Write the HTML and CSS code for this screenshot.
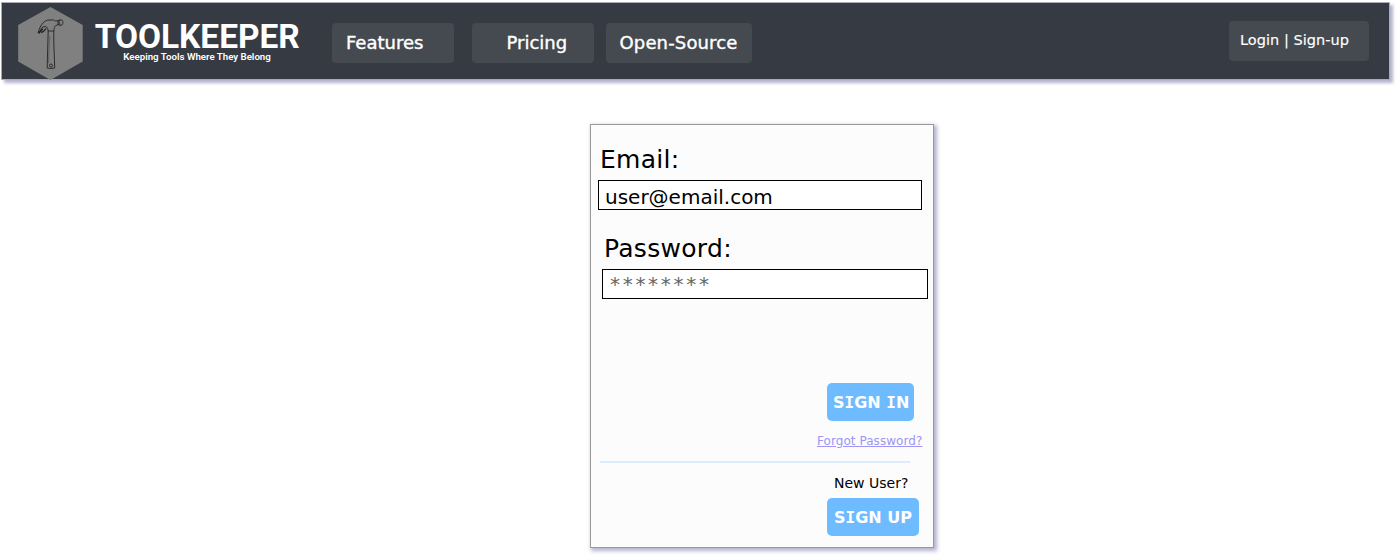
FILE: index.html
```html
<!DOCTYPE html>
<html lang="en">
<head>
<meta charset="utf-8">
<title>Toolkeeper</title>
<link rel="stylesheet" href="styles.css">
</head>
<body>
<header class="topbar">
  <svg class="logo" width="300" height="78" viewBox="0 0 300 78">
    <path class="hex" d="M48.5 4 L80.700 22 V58.500 L48.500 77 L16.200 58.500 V22 Z"/>
    <g class="hammer">
      <path d="M46 28 C46 24 44 23 41 24 C38 25.500 40 28 36 30 L37 27 C39 21 43 17 47 17 H51.500 C53 18.500 55 18 56 17.500 V22 C53 22 52 24 52 28 Z"/>
      <path d="M56 17.500 L59 16.700 C61.500 17 61.500 22 59 22.500 L56 21.500 M58 17 C56.500 19 57 21 58.500 22"/>
      <path d="M46.200 28 C45.800 42 45.500 52 45.200 65 Q49 66 52.700 65 C52.500 53 51.500 42 51.800 28"/>
      <path class="fine" d="M48 33 C46.800 42 47 52 46.500 60"/>
      <circle cx="49" cy="62.500" r="1.500"/>
      <path class="claw" d="M41 26 C38.500 27 37.500 29 36.700 30.500 M44 25.500 C42.500 28 41 29 39 29.500"/>
    </g>
    <text class="brand" x="92.700" y="45" textLength="205" lengthAdjust="spacingAndGlyphs">TOOLKEEPER</text>
    <text class="tagline" x="121.300" y="57.300" textLength="147.500" lengthAdjust="spacingAndGlyphs">Keeping Tools Where They Belong</text>
  </svg>
  <nav class="nav">
    <a class="pill features">Features</a>
    <a class="pill pricing">Pricing</a>
    <a class="pill source">Open-Source</a>
  </nav>
  <a class="pill account">Login | Sign-up</a>
</header>
<main class="card">
  <label class="label">Email:</label>
  <div class="field">user@email.com</div>
  <label class="label password-label">Password:</label>
  <div class="field password">********</div>
  <div class="button sign-in">S<span class="slab">I</span>GN <span class="slab">I</span>N</div>
  <a class="forgot">Forgot Password?</a>
  <div class="divider"></div>
  <div class="new-user">New User?</div>
  <div class="button sign-up">S<span class="slab">I</span>GN UP</div>
</main>
</body>
</html>
```
FILE: styles.css
```css
* { box-sizing: border-box; }
html { height: 100%; }
body {
  margin: 0;
  height: 556px;
  padding: 3px 0 0 2px;
  background: #fff;
  font-family: "DejaVu Sans", Verdana, sans-serif;
  overflow: hidden;
}
.topbar {
  display: flex;
  align-items: flex-start;
  width: 1387px;
  height: 76px;
  background: #363a42;
  box-shadow: 0 0 0 1px #a9abb8, 3px 3px 3px 1px #b4b4cf;
}
.logo { flex: none; overflow: visible; }
.hex { fill: #808080; }
.hammer { fill: none; stroke: #222; stroke-width: .9; }
.fine { stroke: #555; stroke-width: .7; }
.claw { stroke-width: 1.4; }
.brand { font: bold 33.5px Roboto, sans-serif; fill: #fff; }
.tagline { font: 600 9.8px Roboto, sans-serif; fill: #fff; }
.nav { display: flex; margin: 20px 0 0 29.500px; }
.pill {
  height: 40px;
  border-radius: 4px;
  background: #444a4f;
  color: #fff;
  font-size: 18px;
  line-height: 39px;
  white-space: nowrap;
  -webkit-text-stroke: .4px #fff;
}
.features { width: 122px; padding-left: 14.500px; }
.pricing { width: 122px; margin-left: 18px; padding-left: 35px; }
.source { width: 146px; margin-left: 12px; padding-left: 14px; letter-spacing: .15px; }
.account {
  width: 140px;
  margin: 18px 20.500px 0 auto;
  padding-left: 11.500px;
  font-size: 14.500px;
  letter-spacing: .04px;
  -webkit-text-stroke-width: .15px;
}
.card {
  display: flex;
  flex-direction: column;
  width: 344px;
  height: 424px;
  margin: 45px 0 0 588px;
  padding: 19px 0 0 7px;
  border: 1px solid #999;
  background: #fcfcfc;
  box-shadow: 2px 2px 4px 1px #b4b4cf;
  color: #000;
}
.label { height: 36px; padding-left: 2px; line-height: 31px; font-size: 25px; letter-spacing: .3px; }
.password-label { margin-top: 23px; padding-left: 6px; letter-spacing: .3px; line-height: 32px; }
.field {
  width: 324px;
  height: 30px;
  border: 1px solid #000;
  background: #fff;
  padding-left: 6px;
  font-size: 20px;
  line-height: 32px;
}
.password { width: 326px; margin-left: 4px; padding-left: 7px; color: #666; letter-spacing: 2.700px; line-height: 29px; }
.button {
  height: 38px;
  border-radius: 5px;
  background: #6ebbff;
  color: #fff;
  font-size: 16px;
  font-weight: bold;
  line-height: 39px;
  white-space: nowrap;
}
.slab { font-family: "DejaVu Sans Mono", monospace; }
.sign-in { width: 87px; margin: 84px 0 0 229px; padding-left: 6px; }
.forgot {
  margin: 12px 0 0 219px;
  height: 18px;
  color: #9d96f5;
  font-size: 12px;
  line-height: 16px;
  letter-spacing: .06px;
  text-decoration: underline;
}
.divider { width: 310px; height: 2px; margin: 10px 0 0 2px; background: #ddebff; }
.new-user { height: 20px; margin: 10px 0 0 236px; font-size: 14px; line-height: 20px; }
.sign-up { width: 92px; height: 38px; margin: 5px 0 0 229px; padding-left: 7px; }
```
